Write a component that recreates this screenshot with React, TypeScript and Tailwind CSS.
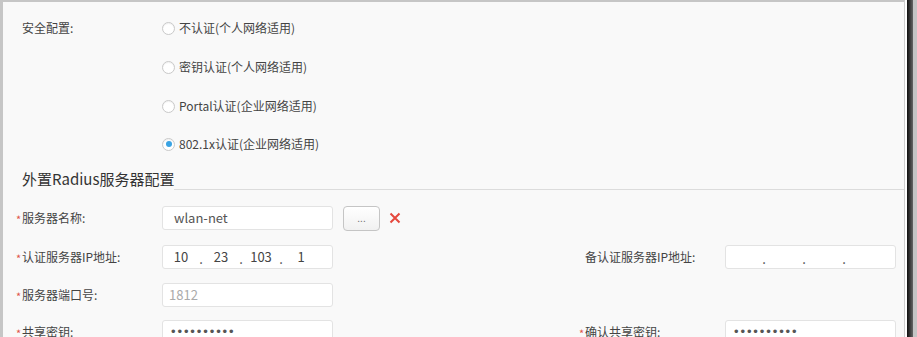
import type { ReactNode } from "react"

const FONT = "font-['Microsoft_YaHei','Noto_Sans_CJK_SC','Noto_Sans',sans-serif]"

const OPTIONS = [
    { label: "不认证(个人网络适用)", checked: false, h: "h-[38px]" },
    { label: "密钥认证(个人网络适用)", checked: false, h: "h-[40px]" },
    { label: "Portal认证(企业网络适用)", checked: false, h: "h-[38px]" },
    { label: "802.1x认证(企业网络适用)", checked: true, h: "h-[38px]" },
]

function Radio({ label, checked, h }: { label: string; checked: boolean; h: string }) {
    return (
        <div className={`${h} flex items-center gap-[4px]`}>
            <span className="w-[13px] h-[13px] rounded-full border border-[#c9c9c9] bg-white flex items-center justify-center shadow-[inset_0_1px_1px_rgba(0,0,0,0.06)]">
                {checked && <span className="w-[6px] h-[6px] rounded-full bg-[#3aa3e3]" />}
            </span>
            <span className="text-[12px] text-[#444]">{label}</span>
        </div>
    )
}

function Field({ label, required, children }: { label: string; required?: boolean; children: ReactNode }) {
    return (
        <div className="flex items-center h-[24px]">
            <span className="w-[6px] text-[11px] text-[#e0554a] leading-none pt-[2px]">{required ? "*" : ""}</span>
            <span className="w-[140px] text-[12px] text-[#444]">{label}</span>
            {children}
        </div>
    )
}

function Box({ children, className = "" }: { children?: ReactNode; className?: string }) {
    return (
        <div className={`w-[171px] h-[24px] bg-white border border-[#e3e3e3] rounded-[3px] flex items-center text-[13px] ${className}`}>
            {children}
        </div>
    )
}

function IpBox({ parts }: { parts: string[] }) {
    return (
        <Box className="pl-[1px] text-[#444]">
            {parts.map((p, i) => (
                <div key={i} className="flex items-center">
                    <span className="w-[34px] text-center">{p}</span>
                    {i < 3 && <span className="w-[6px] text-center text-[13px] pt-[3px]">.</span>}
                </div>
            ))}
        </Box>
    )
}

function Secret() {
    return (
        <Box className="pl-[8px] text-[#555] font-['Liberation_Sans',sans-serif] text-[8px] tracking-[1.9px]">
            ••••••••••
        </Box>
    )
}

export default function App() {
    return (
        <div className={`w-[917px] h-[337px] flex overflow-hidden ${FONT}`}>
            <div className="flex-1 bg-[#f9f9f9] border-l-[3px] border-t-2 border-[#c6c6c6] border-r border-r-[#cfcfcf]">
                {/* SECURITY MODE */}
                <div className="flex pl-[19px] pt-[7px]">
                    <div className="w-[140px] h-[38px] flex items-center text-[12px] text-[#444]">安全配置:</div>
                    <div>
                        {OPTIONS.map(o => (
                            <Radio key={o.label} label={o.label} checked={o.checked} h={o.h} />
                        ))}
                    </div>
                </div>

                {/* HEADING */}
                <div className="flex items-end ml-[19px] mt-[5px] h-[21px]">
                    <span className="text-[15px] leading-[21px] text-[#333]">外置Radius服务器配置</span>
                    <div className="flex-1 border-b border-[#dcdcdc] mb-[-1px]" />
                </div>

                {/* RADIUS FORM */}
                <div className="pl-[13px] flex flex-col">
                    <div className="mt-[17px]">
                        <Field label="服务器名称:" required>
                            <Box className="pl-[11px] text-[#555]">wlan-net</Box>
                            <button className="ml-[10px] w-[37px] h-[25px] rounded-[4px] border border-[#c5c5c5] bg-gradient-to-b from-white to-[#f1f1f1] text-[10px] text-[#777] leading-none">
                                ...
                            </button>
                            <svg className="ml-[9px]" width="12" height="12" viewBox="0 0 12 12">
                                <path d="M1.5 1.5 L10.5 10.5 M10.5 1.5 L1.5 10.5" stroke="#e5483d" strokeWidth="2" />
                            </svg>
                        </Field>
                    </div>
                    <div className="mt-[15px] grid grid-cols-[563px_1fr]">
                        <Field label="认证服务器IP地址:" required>
                            <IpBox parts={["10", "23", "103", "1"]} />
                        </Field>
                        <Field label="备认证服务器IP地址:">
                            <IpBox parts={["", "", "", ""]} />
                        </Field>
                    </div>
                    <div className="mt-[14px]">
                        <Field label="服务器端口号:" required>
                            <Box className="pl-[6px] text-[#aaa]">1812</Box>
                        </Field>
                    </div>
                    <div className="mt-[13px] grid grid-cols-[563px_1fr]">
                        <Field label="共享密钥:" required>
                            <Secret />
                        </Field>
                        <Field label="确认共享密钥:" required>
                            <Secret />
                        </Field>
                    </div>
                </div>
            </div>
            <div className="w-[2px] bg-white" />
            <div className="w-[6px] bg-gradient-to-r from-[#111] to-[#666]" />
            <div className="w-[4px] bg-[#c4c4c4]" />
        </div>
    )
}
